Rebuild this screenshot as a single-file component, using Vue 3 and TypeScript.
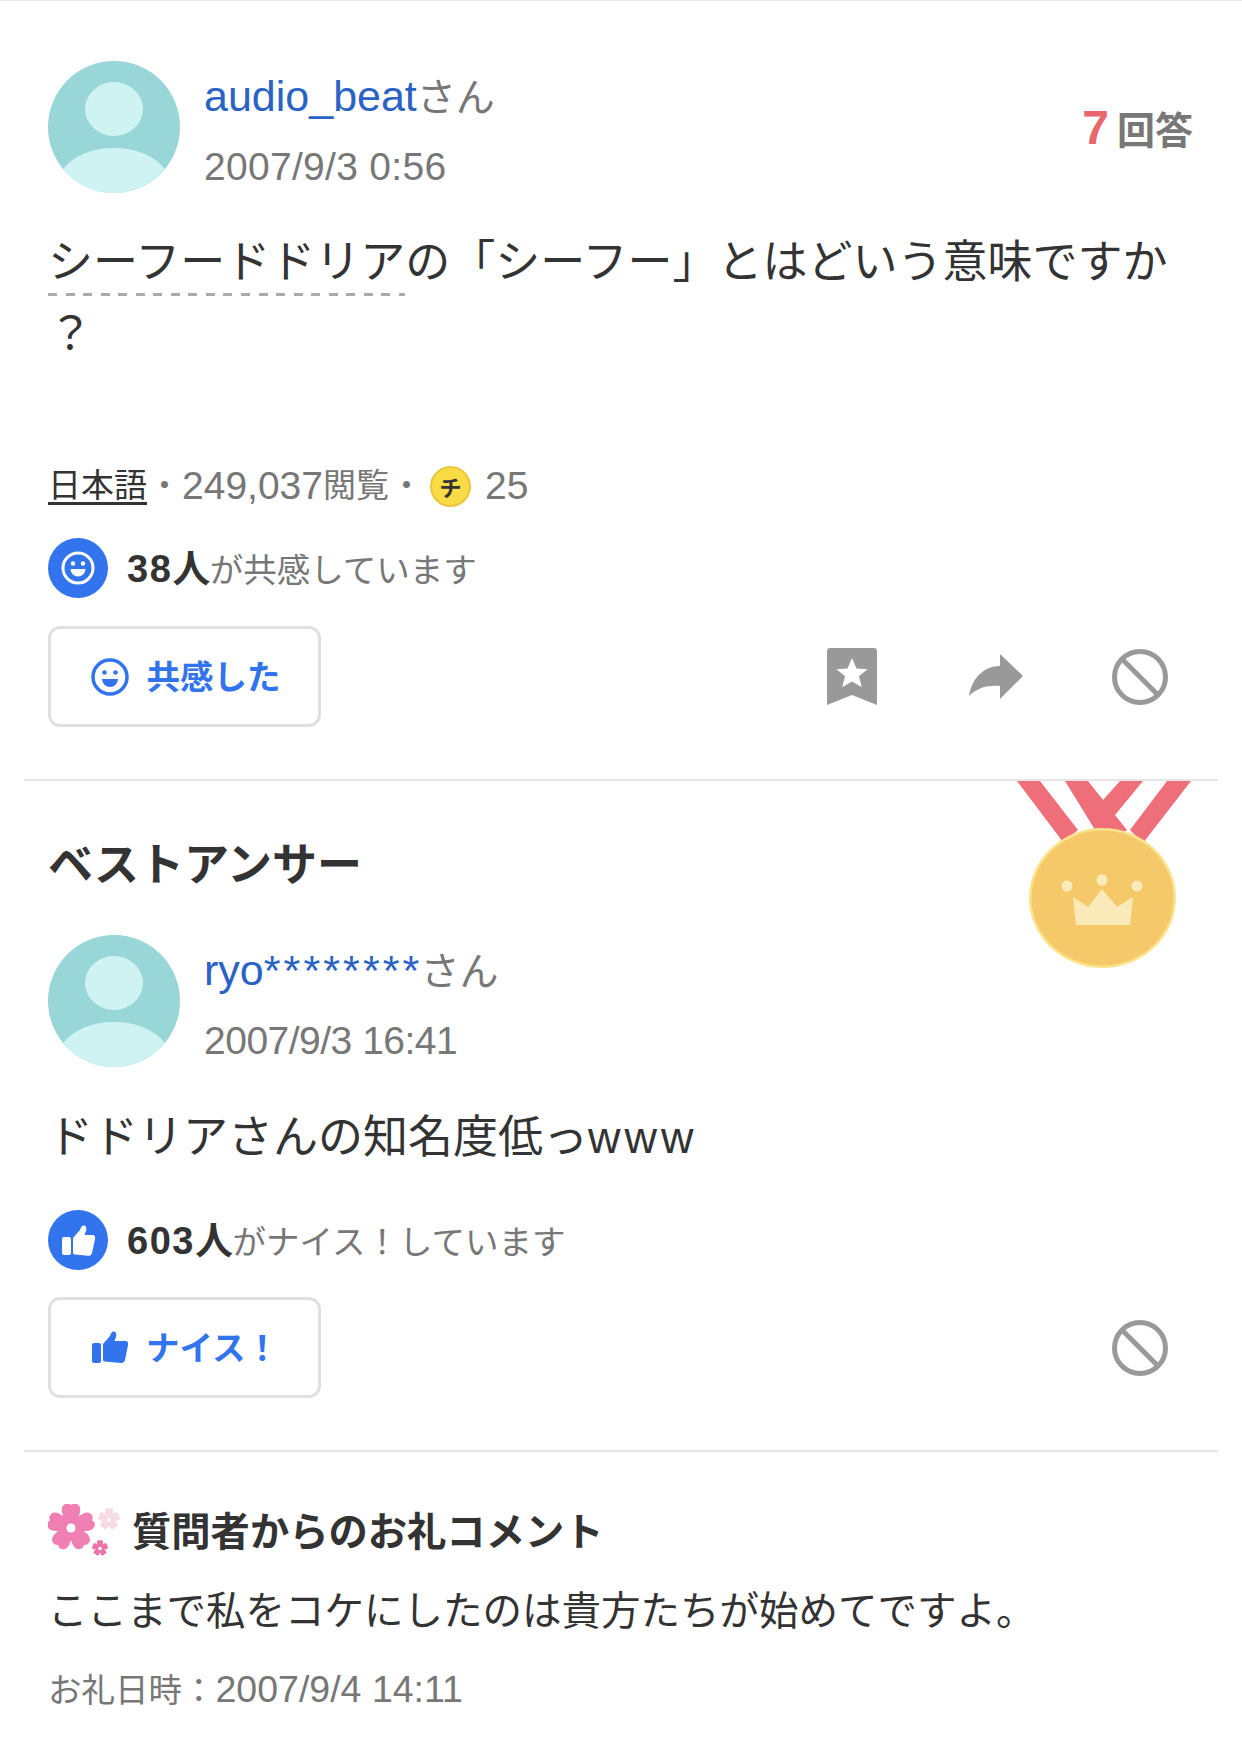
<script setup lang="ts">
function flower(cx: number, cy: number, r: number): string {
  const pt = (deg: number, k: number) => {
    const a = ((deg - 90) * Math.PI) / 180
    return `${(cx + Math.cos(a) * r * k).toFixed(1)} ${(cy + Math.sin(a) * r * k).toFixed(1)}`
  }
  let d = `M${pt(-36, 0.55)}`
  for (let i = 0; i < 5; i++) {
    const a = i * 72
    d += ` Q${pt(a - 28, 1.08)} ${pt(a - 7, 1)} L${pt(a, 0.92)} L${pt(a + 7, 1)} Q${pt(a + 28, 1.08)} ${pt(a + 36, 0.55)}`
  }
  return d + "Z"
}
</script>

<template>
  <div class="page">
    <section class="block question">
      <header class="user">
        <svg class="avatar" viewBox="0 0 132 132">
          <circle cx="66" cy="66" r="66" fill="#98d6d8" />
          <ellipse cx="66" cy="48" rx="29" ry="27" fill="#cff2f2" />
          <path d="M15 108C27 94 44 87 66 87s39 7 51 21a66 66 0 0 1-102 0Z" fill="#cff2f2" />
        </svg>
        <div class="user-info">
          <div class="name"><a>audio_beat</a><span class="san">さん</span></div>
          <div class="date date-wide">2007/9/3 0:56</div>
        </div>
        <div class="count"><b>7</b><span>回答</span></div>
      </header>
      <p class="body-text"><span class="keyword">シーフードドリア</span>の「シーフー」とはどいう意味ですか？</p>
      <div class="meta">
        <a class="cat cjk">日本語</a>
        <span class="dot cjk">・</span>
        <span class="num">249,037</span><span class="cjk">閲覧</span>
        <span class="dot cjk">・</span>
        <span class="coin">チ</span>
        <span class="num coin-num">25</span>
      </div>
      <div class="reaction">
        <svg class="badge" viewBox="0 0 60 60">
          <circle cx="30" cy="30" r="30" fill="#3273ee" />
          <circle cx="30" cy="30" r="15" fill="none" stroke="#fff" stroke-width="3" />
          <circle cx="25" cy="25.5" r="2.2" fill="#fff" />
          <circle cx="35" cy="25.5" r="2.2" fill="#fff" />
          <path d="M22.5 31h15a7.500 7.500 0 0 1-15 0Z" fill="#fff" />
        </svg>
        <span class="reaction-text"><b>38人</b>が共感しています</span>
      </div>
      <div class="actions">
        <button class="action-btn">
          <svg class="btn-icon" viewBox="0 0 38 38">
            <circle cx="19" cy="19" r="17" fill="none" stroke="#3273ee" stroke-width="3.500" />
            <circle cx="13.500" cy="14.500" r="2.300" fill="#3273ee" />
            <circle cx="24.500" cy="14.500" r="2.300" fill="#3273ee" />
            <path d="M11 21h16a8 8 0 0 1-16 0Z" fill="#3273ee" />
          </svg>
          <span class="btn-label">共感した</span>
        </button>
        <div class="tools">
          <span class="tool">
            <svg width="50" height="57" viewBox="0 0 50 57">
              <path d="M3 0h44a3 3 0 0 1 3 3v54L25 47 0 57V3a3 3 0 0 1 3-3Z" fill="#999" />
              <path d="M25 10l4.500 10.500 11 .8-8.500 7 2.800 11L25 33.500 15.200 39.300l2.800-11-8.500-7 11-.8Z" fill="#fff" />
            </svg>
          </span>
          <span class="tool">
            <svg width="54" height="45" viewBox="0 0 54 45">
              <path d="M31 0l23 22-23 23V32C18 31 8 34 0 42 3 24 15 12 31 12Z" fill="#999" />
            </svg>
          </span>
          <span class="tool">
            <svg class="ban" viewBox="0 0 56 56">
              <circle cx="28" cy="28" r="25.500" fill="none" stroke="#999" stroke-width="5" />
              <path d="M10 10l36 36" stroke="#999" stroke-width="5" />
            </svg>
          </span>
        </div>
      </div>
    </section>

    <section class="block answer">
      <svg class="medal" viewBox="0 0 178 190">
        <path d="M2 0h23l38 49-15 12Z" fill="#ee6e79" />
        <path d="M50 0h23l15 19L105 0h23l-28 34 12 15-12 8H85Z" fill="#ee6e79" />
        <path d="M152 0h24l-48 62-13-13Z" fill="#ee6e79" />
        <ellipse cx="87.500" cy="117" rx="73.500" ry="70" fill="#fbe38c" />
        <ellipse cx="87.500" cy="117" rx="71" ry="67.500" fill="#f5c96a" />
        <circle cx="52" cy="105" r="5.500" fill="#fbeab9" />
        <circle cx="87" cy="99" r="5.500" fill="#fbeab9" />
        <circle cx="122" cy="105" r="5.500" fill="#fbeab9" />
        <path d="M61 144 58 116 73 126 87 108l15 18 16-10-3 28Z" fill="#fbeab9" />
      </svg>
      <h2 class="best">ベストアンサー</h2>
      <header class="user">
        <svg class="avatar" viewBox="0 0 132 132">
          <circle cx="66" cy="66" r="66" fill="#98d6d8" />
          <ellipse cx="66" cy="48" rx="29" ry="27" fill="#cff2f2" />
          <path d="M15 108C27 94 44 87 66 87s39 7 51 21a66 66 0 0 1-102 0Z" fill="#cff2f2" />
        </svg>
        <div class="user-info">
          <div class="name"><a>ryo<span class="stars">********</span></a><span class="san">さん</span></div>
          <div class="date date-narrow">2007/9/3 16:41</div>
        </div>
      </header>
      <p class="body-text answer-text">ドドリアさんの知名度低っ<span class="www">www</span></p>
      <div class="reaction answer-reaction">
        <svg class="badge" viewBox="0 0 60 60">
          <circle cx="30" cy="30" r="30" fill="#3273ee" />
          <g transform="translate(14 15)" fill="#fff">
            <rect x="0" y="12" width="9" height="18" rx="2" />
            <path d="M11 13 18 5c1-2 1-4 3-4.500 3-.5 4 2.500 3 5.500l-1.500 4H30c3 0 3.500 2 3 4l-3 14c-.5 2-2 3-4 2.800L13 29.500c-1.500 0-2-1-2-2Z" />
          </g>
        </svg>
        <span class="reaction-text"><b>603人</b>がナイス！しています</span>
      </div>
      <div class="actions answer-actions">
        <button class="action-btn">
          <svg class="btn-icon thumb" viewBox="0 0 36 33" fill="#3273ee">
            <rect x="0" y="12" width="9" height="20" rx="2" />
            <path d="M11 13 18 5c1-2 1-4 3-4.500 3-.5 4 2.500 3 5.500l-1.500 4H33c3 0 3.500 2 3 4l-3 15c-.5 2-2 3.200-4 3L13 30.500c-1.500 0-2-1-2-2Z" />
          </svg>
          <span class="btn-label">ナイス！</span>
        </button>
        <div class="tools">
          <span class="tool">
            <svg class="ban" viewBox="0 0 56 56">
              <circle cx="28" cy="28" r="25.500" fill="none" stroke="#999" stroke-width="5" />
              <path d="M10 10l36 36" stroke="#999" stroke-width="5" />
            </svg>
          </span>
        </div>
      </div>
    </section>

    <section class="block thanks">
      <div class="thanks-head">
        <svg class="blossom" viewBox="0 0 72 56">
          <path :d="flower(23, 23, 24)" fill="#f07fb4" />
          <circle cx="23" cy="24" r="4.500" fill="#fff" />
          <path :d="flower(61, 15, 11)" fill="#f7dbe4" />
          <circle cx="61" cy="16" r="2" fill="#fff" />
          <path :d="flower(52, 44, 8)" fill="#ee73a8" />
          <circle cx="52" cy="44.500" r="1.800" fill="#fff" />
        </svg>
        <h3>質問者からのお礼コメント</h3>
      </div>
      <p class="thanks-text">ここまで私をコケにしたのは貴方たちが始めてですよ。</p>
      <div class="thanks-date"><span>お礼日時：</span><span class="thanks-num">2007/9/4 14:11</span></div>
    </section>
  </div>
</template>

<style>
body {
  background: #fff;
}
</style>

<style scoped>
.page {
  height: 1759px;
  border-top: 1px solid #e8e8e8;
  box-sizing: border-box;
  font-family: "Liberation Sans", "Noto Sans CJK JP", sans-serif;
  color: #333;
  overflow: hidden;
}

.block {
  position: relative;
  margin: 0 24px;
  padding: 0 24px;
}

.question,
.answer {
  border-bottom: 2px solid #e6e6e6;
}

.question {
  padding-top: 60px;
  padding-bottom: 52px;
}

.answer {
  padding-top: 55px;
  padding-bottom: 52px;
}

.thanks {
  padding-top: 50px;
}

.user {
  display: flex;
  align-items: flex-start;
}

.avatar {
  width: 132px;
  height: 132px;
  flex: none;
}

.user-info {
  margin-left: 24px;
  padding-top: 11px;
  display: flex;
  flex-direction: column;
  gap: 23px;
}

.name {
  height: 48px;
  line-height: 48px;
  font-size: 43px;
}

.name a {
  color: #2a63c4;
}

.stars {
  margin-right: -2px;
  letter-spacing: 3.100px;
}

.san {
  color: #777;
  font-size: 39px;
}

.date {
  height: 48px;
  line-height: 48px;
  font-size: 39px;
  color: #777;
}

.date-wide {
  letter-spacing: 0.300px;
}

.date-narrow {
  letter-spacing: -0.500px;
}

.count {
  align-self: center;
  margin-left: auto;
  margin-right: 1px;
  display: flex;
  align-items: center;
  gap: 8px;
  font-weight: 700;
  color: #777;
  font-size: 38px;
}

.count b {
  font-size: 48px;
  font-weight: 700;
  color: #e8676f;
}

.body-text {
  margin: 34px 0 0;
  font-size: 45px;
  line-height: 72px;
  min-height: 142px;
  line-break: anywhere;
}

.keyword {
  padding-bottom: 8px;
  background: repeating-linear-gradient(90deg, #aaa 0 9px, transparent 9px 17.550px) left bottom / 100% 3px no-repeat;
}

.answer-text {
  margin-top: 35px;
  min-height: 72px;
}

.www {
  letter-spacing: 4px;
}

.meta {
  margin-top: 91px;
  height: 48px;
  display: flex;
  align-items: center;
  font-size: 33px;
  color: #777;
}

.cjk {
  margin-bottom: 6px;
}

.cat {
  color: #333;
  text-decoration: underline;
  text-underline-offset: 5px;
}

.num {
  font-size: 39px;
}

.dot {
  width: 35px;
  text-align: center;
}

.coin {
  width: 37px;
  height: 37px;
  margin-left: 6px;
  border-radius: 50%;
  background: #f8db45;
  border: 2px solid #eac63f;
  display: flex;
  align-items: center;
  justify-content: center;
  font-size: 22px;
  font-weight: 700;
  color: #333;
}

.coin-num {
  margin-left: 14px;
}

.reaction {
  margin-top: 28px;
  display: flex;
  align-items: center;
  gap: 19px;
  height: 60px;
  font-size: 33.500px;
  color: #777;
}

.reaction-text {
  margin-bottom: 6px;
}

.answer-reaction {
  margin-top: 36px;
}

.reaction b {
  margin-right: -2px;
  font-size: 38px;
  font-weight: 700;
  letter-spacing: 1.500px;
  color: #333;
}

.badge {
  width: 60px;
  height: 60px;
  flex: none;
}

.actions {
  margin-top: 28px;
  display: flex;
  align-items: center;
  justify-content: space-between;
}

.answer-actions {
  margin-top: 27px;
}

.action-btn {
  width: 273px;
  height: 101px;
  display: flex;
  align-items: center;
  justify-content: center;
  gap: 18px;
  padding: 0 0 0 2px;
  border: 3px solid #e0e0e0;
  border-radius: 12px;
  background: #fff;
  font-family: inherit;
  font-size: 33.500px;
  font-weight: 700;
  color: #3273ee;
}

.btn-label {
  margin-bottom: 4px;
}

.btn-icon {
  width: 38px;
  height: 38px;
}

.thumb {
  width: 36px;
  height: 33px;
}

.tools {
  display: flex;
  margin-right: -18px;
}

.tool {
  width: 144px;
  height: 60px;
  display: flex;
  align-items: center;
  justify-content: center;
}

.ban {
  width: 56px;
  height: 56px;
}

.medal {
  position: absolute;
  top: 0;
  right: 25px;
  width: 178px;
  height: 190px;
}

.best {
  margin: 0;
  line-height: 60px;
  font-size: 45px;
  font-weight: 700;
}

.answer .user {
  margin-top: 39px;
}

.thanks-head {
  display: flex;
  align-items: center;
  height: 60px;
  gap: 12px;
}

.blossom {
  width: 72px;
  height: 56px;
  flex: none;
}

.thanks-head h3 {
  margin: 0 0 8px;
  font-size: 39.300px;
  font-weight: 700;
}

.thanks-text {
  margin: 19px 0 0;
  font-size: 39.500px;
  line-height: 60px;
}

.thanks-date {
  margin-top: 24px;
  line-height: 48px;
  font-size: 33.500px;
  color: #777;
}

.thanks-num {
  font-size: 37.500px;
}
</style>
